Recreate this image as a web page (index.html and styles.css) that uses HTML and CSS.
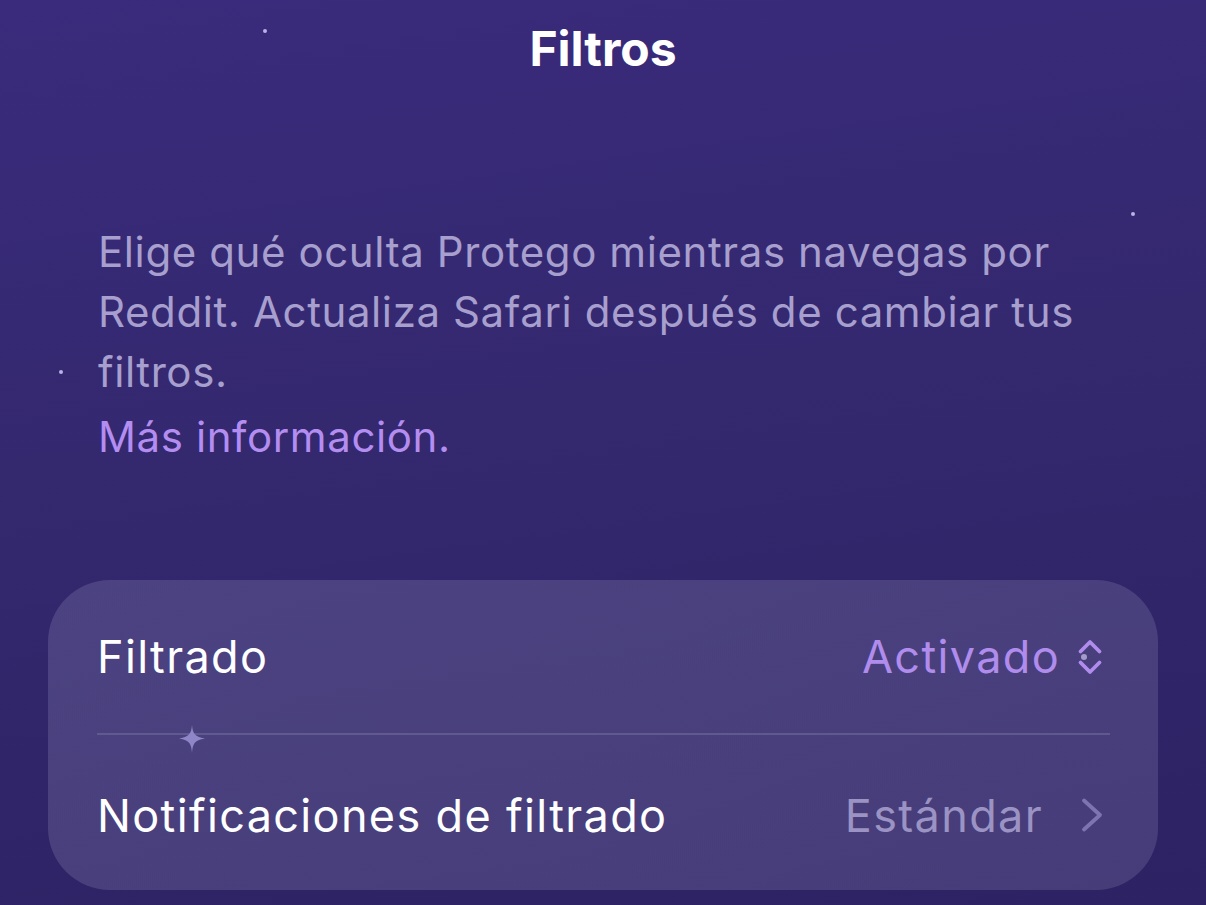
FILE: index.html
```html
<!DOCTYPE html>
<html lang="es">
<head>
<meta charset="utf-8">
<title>Filtros</title>
<link rel="stylesheet" href="styles.css">
</head>
<body>
<div class="screen">
  <span class="star s1"></span>
  <span class="star s2"></span>
  <span class="star s3"></span>
  <header class="nav">
    <h1 class="title">Filtros</h1>
  </header>
  <section class="intro">
    <p class="desc">Elige qué oculta Protego mientras navegas por Reddit. Actualiza Safari después de cambiar tus filtros.</p>
    <a class="link" href="#">Más información.</a>
  </section>
  <section class="card">
    <div class="row first">
      <span class="label">Filtrado</span>
      <span class="value accent">Activado
        <span class="iconwrap">
          <svg class="icon updown" viewBox="0 0 26 38" width="26" height="38"><path d="M3.5 13.5 L13 4 L22.5 13.5 M3.5 24.5 L13 34 L22.5 24.5" fill="none" stroke="#b08cec" stroke-width="3.8" stroke-linecap="round" stroke-linejoin="round"/></svg>
          <span class="dot"></span>
        </span>
      </span>
    </div>
    <div class="sep">
      <svg class="sparkle" viewBox="0 0 26 28" width="26" height="28"><path d="M13 0 C13.8 8 15 11.8 26 13.5 C15 15.2 13.8 19 13 28 C12.2 19 11 15.2 0 13.5 C11 11.8 12.2 8 13 0 Z" fill="#8e86c6"/></svg>
    </div>
    <div class="row second">
      <span class="label">Notificaciones de filtrado</span>
      <span class="value muted">Estándar
        <svg class="icon chev" viewBox="0 0 22 38" width="22" height="38"><path d="M3 4.5 L19 19 L3 33.5" fill="none" stroke="#7e74b2" stroke-width="3.8" stroke-linecap="round" stroke-linejoin="round"/></svg>
      </span>
    </div>
  </section>
</div>
</body>
</html>
```
FILE: styles.css
```css
* { box-sizing: border-box; margin: 0; padding: 0; }
html, body { width: 1206px; height: 905px; overflow: hidden; }
body {
  font-family: Inter, "Noto Sans", sans-serif;
  background: #30246c;
}
.screen {
  position: relative;
  width: 1206px;
  height: 905px;
  background: linear-gradient(172deg, #3a2b7c 0%, #34286f 45%, #2d2263 100%);
  display: flex;
  flex-direction: column;
  padding: 0 48px;
}
.star {
  position: absolute;
  width: 4px; height: 4px;
  border-radius: 50%;
  background: #b9b2e6;
}
.s1 { left: 263px; top: 29px; }
.s2 { left: 1131px; top: 212px; }
.s3 { left: 59px; top: 370px; }
.nav {
  height: 98px;
  display: flex;
  align-items: center;
  justify-content: center;
}
.title {
  color: #ffffff;
  font-size: 48px;
  font-weight: 700;
  letter-spacing: 0;
  margin-top: -2px;
}
.intro {
  padding: 124px 50px 0;
}
.desc {
  color: #a79fcd;
  font-size: 42px;
  line-height: 60px;
  letter-spacing: 0.6px;
  font-weight: 400;
}
.link {
  display: block;
  color: #b38df0;
  font-size: 42px;
  line-height: 60px;
  letter-spacing: 0.6px;
  margin-top: 5px;
  text-decoration: none;
}
.card {
  position: relative;
  margin-top: 113px;
  background: linear-gradient(160deg, rgba(96, 88, 146, 0.56) 0%, rgba(92, 84, 140, 0.52) 100%);
  border-radius: 62px;
  padding: 0 55px 0 49px;
}
.row {
  display: flex;
  align-items: center;
  justify-content: space-between;
  font-size: 45px;
  letter-spacing: 1.35px;
}
.first { height: 153px; }
.second { height: 155px; padding-top: 5px; }
.label { color: #ffffff; }
.value { display: flex; align-items: center; }
.accent { color: #b08cec; }
.muted { color: #9b93c3; }
.iconwrap { position: relative; display: flex; margin-left: 17px; }
.dot {
  position: absolute;
  left: 4px; top: 16px;
  width: 6px; height: 6px;
  border-radius: 50%;
  background: #a49cc8;
}
.chev { margin-left: 38px; }
.sep {
  position: relative;
  height: 2px;
  margin-right: -7px;
  background: rgba(120, 116, 158, 0.5);
}
.sparkle {
  position: absolute;
  left: 82px;
  top: -8px;
}
```
